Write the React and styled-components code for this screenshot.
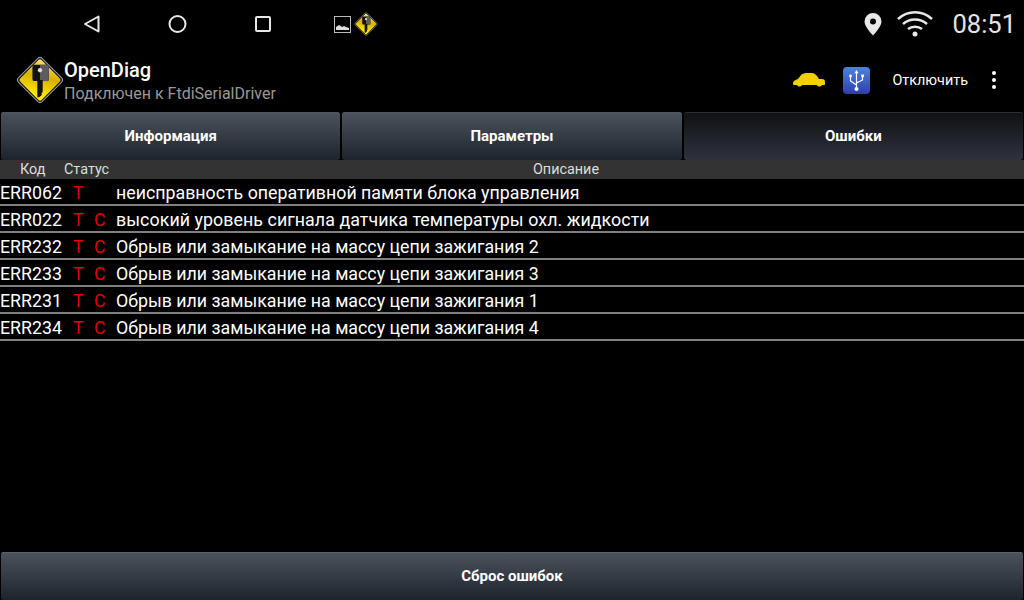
import React, { useId } from "react";
import styled, { createGlobalStyle } from "styled-components";

const GlobalStyle = createGlobalStyle`
    html, body {
        margin: 0;
        padding: 0;
        background: #000;
    }
    * {
        box-sizing: border-box;
    }
`;

const Screen = styled.div`
    width: 1024px;
    height: 600px;
    background: #000;
    display: flex;
    flex-direction: column;
    overflow: hidden;
    font-family: Roboto, "Liberation Sans", sans-serif;
    color: #fff;
`;

const StatusBar = styled.div`
    height: 48px;
    flex: none;
    display: flex;
    align-items: center;
    padding-left: 79px;
`;

const NavIcon = styled.svg`
    width: 24px;
    height: 24px;
    margin-right: 62px;
    flex: none;
`;

const Notifications = styled.div`
    display: flex;
    align-items: center;
    gap: 2px;
    margin-left: -3px;
`;

const StatusRight = styled.div`
    margin-left: auto;
    display: flex;
    align-items: center;
    padding-right: 8px;
`;

const Clock = styled.span`
    font-size: 25.5px;
    color: #e4e4e4;
    margin-left: 19px;
`;

const ActionBar = styled.div`
    height: 64px;
    flex: none;
    display: flex;
    align-items: center;
    padding: 0 0 0 14px;
`;

const Titles = styled.div`
    display: flex;
    flex-direction: column;
    margin-left: -2px;
    padding-top: 4px;
`;

const AppName = styled.div`
    font-size: 20px;
    font-weight: 500;
    line-height: 24px;
`;

const SubTitle = styled.div`
    font-size: 16px;
    line-height: 24px;
    color: #999;
`;

const Actions = styled.div`
    margin-left: auto;
    display: flex;
    align-items: center;
    gap: 17px;
`;

const DisconnectText = styled.span`
    font-size: 14.4px;
    margin-left: 5px;
    margin-right: -3px;
`;

const MenuIcon = styled.svg`
    width: 24px;
    height: 24px;
    margin-right: 18px;
    flex: none;
`;

const Tabs = styled.div`
    height: 48px;
    flex: none;
    display: flex;
    gap: 2px;
    padding: 0 1px;
`;

const Tab = styled.div`
    flex: 1;
    display: flex;
    align-items: center;
    justify-content: center;
    font-size: 15px;
    font-weight: 700;
    border-radius: 3px;
    box-shadow: inset 0 1px 0 ${(p) => (p.$active ? "#2c2e31" : "#50565e")};
    background: ${(p) =>
        p.$active
            ? "linear-gradient(#0f1114, #2e323d)"
            : "linear-gradient(#4c535d, #1e242c)"};
`;

const HeaderRow = styled.div`
    height: 19px;
    flex: none;
    background: #333;
    display: flex;
    align-items: center;
    font-size: 14.4px;
    color: #ddd;
`;

const HeadCode = styled.span`
    width: 64px;
    padding-left: 20px;
`;

const HeadStatus = styled.span`
    width: 44px;
`;

const HeadDescription = styled.span`
    flex: 1;
    text-align: center;
`;

const List = styled.div`
    flex: 1;
`;

const Row = styled.div`
    height: 27px;
    display: flex;
    align-items: center;
    border-bottom: 2px solid #808080;
    font-size: 17.8px;
    padding-top: 2px;
`;

const Code = styled.span`
    width: 73px;
`;

const Flag = styled.span`
    width: 21px;
    color: #e00000;
    ${(p) => p.$last && "width: 22px;"}
`;

const Description = styled.span`
    white-space: nowrap;
    letter-spacing: ${(p) => p.$spacing || 0}px;
`;

const BottomButton = styled.div`
    height: 48px;
    flex: none;
    margin: 0 1px;
    display: flex;
    align-items: center;
    justify-content: center;
    font-size: 15px;
    font-weight: 700;
    border-radius: 3px;
    box-shadow: inset 0 1px 0 #5a6069;
    background: linear-gradient(#4c535d, #1e242c);
`;

function LogoIcon({ size }) {
    const id = useId();
    return (
        <svg width={size} height={size} viewBox="0 0 48 48" style={{ flex: "none" }}>
            <defs>
                <linearGradient id={id} x1="0" y1="0" x2="0.6" y2="1">
                    <stop offset="0" stopColor="#f6e27a" />
                    <stop offset="0.5" stopColor="#d8b000" />
                    <stop offset="1" stopColor="#ffe600" />
                </linearGradient>
            </defs>
            <rect x="8.5" y="8.5" width="31" height="31" rx="3" transform="rotate(45 24 24)" fill="#111" stroke="#999" strokeWidth="1" />
            <rect x="10" y="10" width="28" height="28" rx="2" transform="rotate(45 24 24)" fill={`url(#${id})`} />
            <rect x="17" y="10" width="15" height="15" rx="2" fill="#111" />
            <rect x="24" y="10" width="8" height="15" fill="#5c5c5c" />
            <circle cx="24" cy="15" r="2" fill="#ddd" />
            <path d="M21.5 24h5v11l-1 1v2l-2.500 2h-1.500z" fill="#111" />
        </svg>
    );
}

function CarIcon() {
    return (
        <svg width="34" height="18" viewBox="0 0 34 18" style={{ flex: "none" }}>
            <path d="M1 12c0-2 2-3 5-4l3-4c1-1 3-2 5-2h6c2 0 3 1 5 3l2 3h3c2 0 3 1 3 3v2c0 1-1 1-2 1h-1c-1 2-4 2-5 0H10c-1 2-4 2-5 0H2c-1 0-1-1-1-2z" fill="#f3cf00" />
        </svg>
    );
}

function UsbIcon() {
    const id = useId();
    return (
        <svg width="27" height="27" viewBox="0 0 27 27" style={{ flex: "none" }}>
            <defs>
                <linearGradient id={id} x1="0" y1="0" x2="0" y2="1">
                    <stop offset="0" stopColor="#4d82e0" />
                    <stop offset="1" stopColor="#2d3fae" />
                </linearGradient>
            </defs>
            <rect width="27" height="27" rx="4" fill={`url(#${id})`} />
            <path d="M13.500 5v18M13.500 18l-6-4v-4M13.500 16l6-3V9" stroke="#fff" strokeWidth="1.200" fill="none" />
            <circle cx="13.500" cy="22" r="2" fill="#fff" />
            <path d="M13.500 3l-2 3.200h4z" fill="#fff" />
            <circle cx="7.500" cy="9" r="1.400" fill="#fff" />
            <rect x="18.300" y="7.500" width="2.600" height="2.600" fill="#fff" />
        </svg>
    );
}

const errors = [
    { code: "ERR062", c: false, text: "неисправность оперативной памяти блока управления" },
    { code: "ERR022", c: true, spacing: 0.07, text: "высокий уровень сигнала датчика температуры охл. жидкости" },
    { code: "ERR232", c: true, text: "Обрыв или замыкание на массу цепи зажигания 2" },
    { code: "ERR233", c: true, text: "Обрыв или замыкание на массу цепи зажигания 3" },
    { code: "ERR231", c: true, text: "Обрыв или замыкание на массу цепи зажигания 1" },
    { code: "ERR234", c: true, text: "Обрыв или замыкание на массу цепи зажигания 4" },
];

export default function App() {
    return (
        <Screen>
            <GlobalStyle />
            <StatusBar>
                <NavIcon viewBox="0 0 24 24">
                    <path d="M19.500 4.500v15L6 12z" fill="none" stroke="#e8e8e8" strokeWidth="2" strokeLinejoin="round" />
                </NavIcon>
                <NavIcon viewBox="0 0 24 24">
                    <circle cx="12.500" cy="12" r="8" fill="none" stroke="#e8e8e8" strokeWidth="2" />
                </NavIcon>
                <NavIcon viewBox="0 0 24 24">
                    <rect x="5" y="5" width="14" height="14" rx="1" fill="none" stroke="#e8e8e8" strokeWidth="2" />
                </NavIcon>
                <Notifications>
                    <svg width="17" height="17" viewBox="0 0 17 17">
                        <rect x="0.500" y="0.500" width="16" height="16" fill="none" stroke="#bbb" />
                        <path d="M2 14v-3l3-2 3 2 2-1 2 1 3 1v2z" fill="#ddd" />
                    </svg>
                    <LogoIcon size={26} />
                </Notifications>
                <StatusRight>
                    <svg width="18" height="24" viewBox="0 0 18 24">
                        <path fillRule="evenodd" d="M9 1a8.500 8.500 0 0 0-8.500 8.500C.5 15 9 23.500 9 23.500S17.500 15 17.500 9.500A8.500 8.500 0 0 0 9 1zm0 5.500a3 3 0 1 1 0 6 3 3 0 0 1 0-6z" fill="#e8e8e8" />
                    </svg>
                    <svg width="36" height="26" viewBox="0 0 36 26" style={{ marginLeft: 15 }}>
                        <g fill="none" stroke="#e8e8e8" strokeWidth="2.500">
                            <path d="M1 8c10-9 24-9 34 0" />
                            <path d="M6 13c7-6 17-6 24 0" />
                            <path d="M11 18c4-3 10-3 14 0" />
                        </g>
                        <circle cx="18" cy="23" r="2.500" fill="#e8e8e8" />
                    </svg>
                    <Clock>08:51</Clock>
                </StatusRight>
            </StatusBar>
            <ActionBar>
                <LogoIcon size={52} />
                <Titles>
                    <AppName>OpenDiag</AppName>
                    <SubTitle>Подключен к FtdiSerialDriver</SubTitle>
                </Titles>
                <Actions>
                    <CarIcon />
                    <UsbIcon />
                    <DisconnectText>Отключить</DisconnectText>
                    <MenuIcon viewBox="0 0 24 24">
                        <circle cx="12" cy="5" r="2" fill="#fff" />
                        <circle cx="12" cy="12" r="2" fill="#fff" />
                        <circle cx="12" cy="19" r="2" fill="#fff" />
                    </MenuIcon>
                </Actions>
            </ActionBar>
            <Tabs>
                <Tab>Информация</Tab>
                <Tab>Параметры</Tab>
                <Tab $active>Ошибки</Tab>
            </Tabs>
            <HeaderRow>
                <HeadCode>Код</HeadCode>
                <HeadStatus>Статус</HeadStatus>
                <HeadDescription>Описание</HeadDescription>
            </HeaderRow>
            <List>
                {errors.map((e) => (
                    <Row key={e.code}>
                        <Code>{e.code}</Code>
                        <Flag>T</Flag>
                        <Flag $last>{e.c ? "C" : ""}</Flag>
                        <Description $spacing={e.spacing}>{e.text}</Description>
                    </Row>
                ))}
            </List>
            <BottomButton>Сброс ошибок</BottomButton>
        </Screen>
    );
}
